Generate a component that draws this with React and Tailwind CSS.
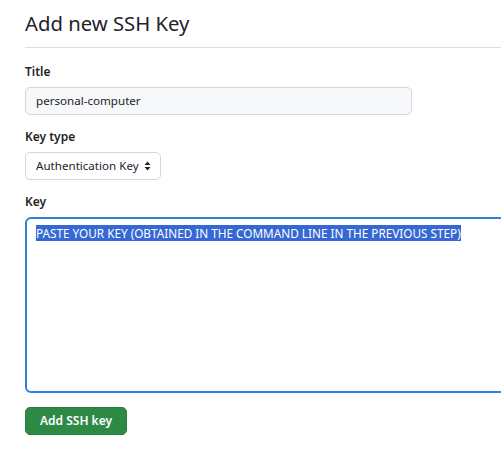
export default function App() {
  return (
    <div className="w-[501px] h-[450px] bg-white overflow-hidden text-[#1f2328] font-['Noto_Sans',sans-serif]">
      <div className="pl-[25px]">
        <div className="h-[48px] border-b border-[#d8dee4] flex items-start pt-[9px]">
          <h2 className="text-[20.3px] leading-[28px] font-normal">Add new SSH Key</h2>
        </div>
        <div className="mt-[15px] text-[12px] leading-[18px] font-semibold">Title</div>
        <div className="mt-[6px] w-[387px] h-[28px] rounded-[5px] border border-[#d0d7de] bg-[#f6f8fa] flex items-center pl-[10px] text-[11.6px] whitespace-nowrap">
          personal-computer
        </div>
        <div className="mt-[13px] text-[12px] leading-[18px] font-semibold">Key type</div>
        <div className="mt-[6px] w-[136px] h-[28px] rounded-[5px] border border-[#d0d7de] bg-white flex items-center pl-[10px] pr-[9px] justify-between text-[11.6px] whitespace-nowrap">
          <span>Authentication Key</span>
          <svg width="7" height="10" viewBox="0 0 7 10" className="shrink-0">
            <path d="M3.5 0.5 L6.5 4 L0.5 4 Z" fill="#1f2328" />
            <path d="M3.5 9.5 L6.5 6 L0.5 6 Z" fill="#1f2328" />
          </svg>
        </div>
        <div className="mt-[13px] text-[12px] leading-[18px] font-semibold">Key</div>
        <div className="mt-[6px] w-[500px] h-[176px] rounded-[6px] border-2 border-[#2f7fe0] bg-white pl-[9px] pt-[6px] text-[11.75px] leading-[17px] whitespace-nowrap">
          <span className="bg-[#3568d4] text-white">PASTE YOUR KEY (OBTAINED IN THE COMMAND LINE IN THE PREVIOUS STEP)</span>
        </div>
        <button className="mt-[14px] h-[28px] px-[14px] rounded-[5px] bg-[#2c8a45] border border-[#2a7f40] text-white text-[12px] font-semibold">
          Add SSH key
        </button>
      </div>
    </div>
  );
}
